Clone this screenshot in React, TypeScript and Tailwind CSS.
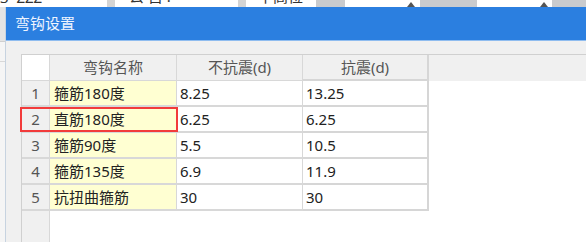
import React from "react";

const rows = [
  { no: 1, name: "箍筋180度", plain: "8.25", seismic: "13.25" },
  { no: 2, name: "直筋180度", plain: "6.25", seismic: "6.25" },
  { no: 3, name: "箍筋90度", plain: "5.5", seismic: "10.5" },
  { no: 4, name: "箍筋135度", plain: "6.9", seismic: "11.9" },
  { no: 5, name: "抗扭曲箍筋", plain: "30", seismic: "30" },
];

// strip of the main window that shows above the dialog
const TopStrip = () => (
  <div className="flex h-[7px] overflow-hidden bg-white text-[15px] leading-none text-[#333]">
    <div className="w-[107px] shrink-0 overflow-hidden">
      <span className="-mt-[10px] block whitespace-nowrap">3 &nbsp;ZZZ</span>
    </div>
    <div className="w-[8px] shrink-0 bg-[#d4d4d4]" />
    <div className="w-[123px] shrink-0 overflow-hidden pl-[14px]">
      <span className="-mt-[11px] block whitespace-nowrap">公 目 .</span>
    </div>
    <div className="w-[8px] shrink-0 bg-[#d4d4d4]" />
    <div className="w-[70px] shrink-0 overflow-hidden pl-[12px]">
      <span className="-mt-[11px] block whitespace-nowrap">不高位</span>
    </div>
    <div className="w-[29px] shrink-0 bg-[#c9cbce]" />
    <div className="relative w-[75px] shrink-0">
      <span className="absolute right-[5px] top-[2px] h-0 w-0 border-x-[4px] border-b-[5px] border-x-transparent border-b-[#555]" />
    </div>
    <div className="w-[57px] shrink-0 bg-[#c9cbce]" />
    <div className="relative w-[75px] shrink-0">
      <span className="absolute right-[4px] top-[2px] h-0 w-0 border-x-[4px] border-b-[5px] border-x-transparent border-b-[#555]" />
    </div>
    <div className="flex-1 bg-[#c9cbce]" />
  </div>
);

const App = () => {
  return (
    <div className="flex h-[242px] w-[586px] flex-col overflow-hidden bg-white font-['Noto_Sans','Noto_Sans_CJK_SC',sans-serif]">
      <TopStrip />
      <div className="flex flex-1">
        <div className="flex w-[5px] shrink-0 flex-col bg-[#f5f5f5]">
          <div className="h-[35px] border-b border-[#cfcfcf] bg-[#e4e4e4]" />
          <div className="h-[20px] border-b border-[#d8d8d8]" />
        </div>
        <div className="flex flex-1 flex-col border-l border-[#c7d3e0]">
          <div className="flex h-[33px] items-center bg-[#2b7fe0] pl-[9px] text-[15px] text-[#eef4ff]">
            弯钩设置
          </div>
          <div className="h-px bg-[#8fbcef]" />
          <div className="flex flex-1 flex-col bg-[#f0f0f0] pl-[15px] pt-[13px]">
            <div className="relative flex flex-1 flex-col border-l border-t border-[#d0d0d0] bg-white text-[15px] leading-none">
              <div className="flex h-[26px] text-[#555]">
                <div className="w-[28px] border-b border-r border-[#d8d8d8] bg-white" />
                <div className="flex w-[127px] items-center justify-center border-b border-r border-[#d8d8d8] bg-[#f0f0f0]">
                  弯钩名称
                </div>
                <div className="flex w-[126px] items-center justify-center border-b border-r border-[#d8d8d8] bg-[#f0f0f0]">
                  不抗震(d)
                </div>
                <div className="flex w-[126px] items-center justify-center border-b-2 border-r-2 border-[#d6d6d6] bg-[#f0f0f0]">
                  抗震(d)
                </div>
                <div className="flex-1 bg-[#f0f0f0]" />
              </div>
              {rows.map((r) => (
                <div key={r.no} className="flex h-[26px] text-[#222]">
                  <div className="flex w-[28px] items-center justify-center border-b-2 border-r border-[#d8d8d8] bg-[#f0f0f0] text-[#555]">
                    {r.no}
                  </div>
                  <div className="flex w-[127px] items-center border-b-2 border-r border-[#d8d8d8] bg-[#ffffd2] pl-[4px]">
                    {r.name}
                  </div>
                  <div className="flex w-[126px] items-center border-b-2 border-r border-[#d8d8d8] pl-[3px]">
                    {r.plain}
                  </div>
                  <div className="flex w-[126px] items-center border-b-2 border-r-2 border-[#d6d6d6] pl-[3px]">
                    {r.seismic}
                  </div>
                </div>
              ))}
              <div className="flex flex-1">
                <div className="w-[28px] border-r border-[#d8d8d8] bg-[#f0f0f0]" />
              </div>
              <div className="absolute left-[-2px] top-[52px] h-[25px] w-[158px] border-2 border-[#f23b3b]" />
            </div>
          </div>
        </div>
      </div>
    </div>
  );
};

export default App;
